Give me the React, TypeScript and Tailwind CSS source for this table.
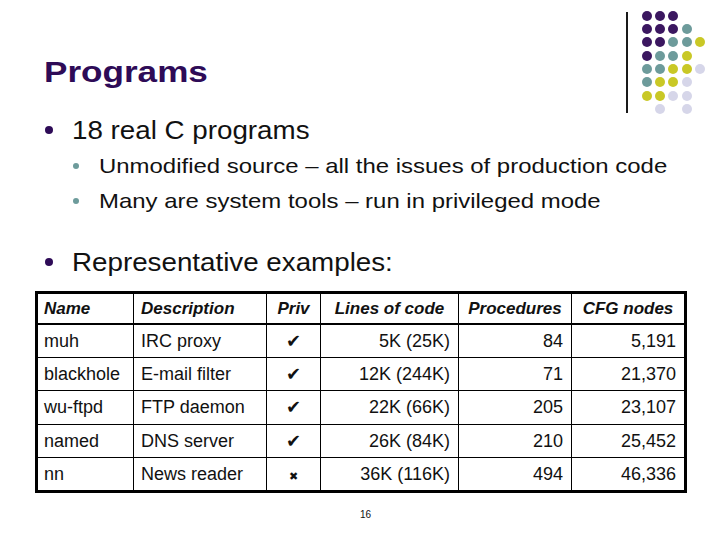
import React from 'react'

const P = 'bg-[#3b1760]'
const T = 'bg-[#6d9b9b]'
const Y = 'bg-[#c9c826]'
const L = 'bg-[#d6d6e9]'

// decoration dot grid, top right corner
const dots: (string | null)[][] = [
  [P, P, P, null, null],
  [P, P, P, T, null],
  [P, P, T, T, Y],
  [P, T, T, Y, null],
  [T, T, Y, Y, L],
  [T, Y, Y, L, null],
  [Y, Y, L, L, null],
  [null, L, null, L, null],
]

const rows = [
  { name: 'muh', desc: 'IRC proxy', priv: true, lines: '5K (25K)', procs: '84', cfg: '5,191' },
  { name: 'blackhole', desc: 'E-mail filter', priv: true, lines: '12K (244K)', procs: '71', cfg: '21,370' },
  { name: 'wu-ftpd', desc: 'FTP daemon', priv: true, lines: '22K (66K)', procs: '205', cfg: '23,107' },
  { name: 'named', desc: 'DNS server', priv: true, lines: '26K (84K)', procs: '210', cfg: '25,452' },
  { name: 'nn', desc: 'News reader', priv: false, lines: '36K (116K)', procs: '494', cfg: '46,336' },
]

function Decor() {
  return (
    <div className="absolute left-[626px] top-[9px] flex gap-[12px]">
      <div className="mt-[3px] h-[101px] w-[2px] bg-[#1a1a1a]" />
      <div className="grid grid-cols-[repeat(5,13.33px)] auto-rows-[13.33px]">
        {dots.flat().map((c, i) => (
          <div key={i} className="flex items-center justify-center">
            {c && <div className={`h-[10px] w-[10px] rounded-full ${c}`} />}
          </div>
        ))}
      </div>
    </div>
  )
}

export default function App() {
  return (
    <div className="relative h-[540px] w-[720px] overflow-hidden bg-white font-['Liberation_Sans',Arial,sans-serif] text-[#111]">
      <Decor />

      <div className="pl-[44px] pt-[52px]">
        <div className="flex h-[40px] items-center">
          <h1 className="inline-block origin-left scale-x-[1.17] text-[30px] font-bold leading-none text-[#2e0b57]">
            Programs
          </h1>
        </div>
      </div>

      <div className="mt-[20px]">
        <div className="flex h-[36px] items-center">
          <div className="ml-[45px] h-[8px] w-[8px] rounded-full bg-[#2e0b57]" />
          <span className="ml-[19px] inline-block origin-left scale-x-[1.11] text-[25px] leading-none">
            18 real C programs
          </span>
        </div>
        <div className="flex h-[35px] items-center">
          <div className="ml-[73px] h-[6px] w-[6px] rounded-full bg-[#6d9b9b]" />
          <span className="ml-[20px] inline-block origin-left scale-x-[1.14] text-[21px] leading-none">
            Unmodified source – all the issues of production code
          </span>
        </div>
        <div className="flex h-[35px] items-center">
          <div className="ml-[73px] h-[6px] w-[6px] rounded-full bg-[#6d9b9b]" />
          <span className="ml-[20px] inline-block origin-left scale-x-[1.14] text-[21px] leading-none">
            Many are system tools – run in privileged mode
          </span>
        </div>
        <div className="mt-[26px] flex h-[36px] items-center">
          <div className="ml-[45px] h-[8px] w-[8px] rounded-full bg-[#2e0b57]" />
          <span className="ml-[19px] inline-block origin-left scale-x-[1.11] text-[25px] leading-none">
            Representative examples:
          </span>
        </div>
      </div>

      <table className="ml-[35px] mt-[11px] w-[649px] table-fixed border-collapse border-[3px] border-black text-[18px] leading-none">
        <colgroup>
          <col className="w-[97px]" />
          <col className="w-[133px]" />
          <col className="w-[54px]" />
          <col className="w-[138px]" />
          <col className="w-[113px]" />
          <col className="w-[114px]" />
        </colgroup>
        <thead>
          <tr className="h-[31px] border-b-2 border-black text-[17px] font-bold italic">
            <th className="px-[6px] text-left">Name</th>
            <th className="border-l border-black px-[7px] text-left">Description</th>
            <th className="border-l border-black text-center">Priv</th>
            <th className="border-l border-black text-center">Lines of code</th>
            <th className="border-l border-black text-center">Procedures</th>
            <th className="border-l border-black text-center">CFG nodes</th>
          </tr>
        </thead>
        <tbody>
          {rows.map((r) => (
            <tr key={r.name} className="h-[33.6px] border-b border-black">
              <td className="px-[6px]">{r.name}</td>
              <td className="border-l border-black px-[7px]">{r.desc}</td>
              <td className="border-l border-black text-center font-['DejaVu_Sans',sans-serif]">
                {r.priv ? (
                  <span className="text-[18px]">✔</span>
                ) : (
                  <span className="text-[11px]">✖</span>
                )}
              </td>
              <td className="border-l border-black pr-[8px] text-right">{r.lines}</td>
              <td className="border-l border-black pr-[8px] text-right">{r.procs}</td>
              <td className="border-l border-black pr-[8px] text-right">{r.cfg}</td>
            </tr>
          ))}
        </tbody>
      </table>

      <div className="mt-[17px] pl-[360px] text-[10px] leading-none">16</div>
    </div>
  )
}
